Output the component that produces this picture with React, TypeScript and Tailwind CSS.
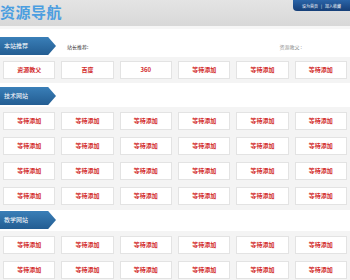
import React from "react";

const font = { fontFamily: '"Microsoft YaHei", "Noto Sans CJK SC", sans-serif' };

function Label({ text }: { text: string }) {
  return (
    <div className="h-[18px] w-[56px] bg-gradient-to-b from-[#3a7fb8] to-[#235d92] [clip-path:polygon(0_0,86%_0,100%_50%,86%_100%,0_100%)] flex items-center pl-[4px]">
      <span className="text-[6px] leading-none text-white">{text}</span>
    </div>
  );
}

function Cell({ text }: { text: string }) {
  return (
    <div className="h-[18px] bg-white border border-[#e3e3e3] flex items-center justify-center">
      <span className="text-[6px] leading-none font-bold text-[#d22c2c]">{text}</span>
    </div>
  );
}

function Grid({ items, top }: { items: string[]; top: boolean }) {
  return (
    <div
      className={
        top
          ? "bg-[#f4f4f4] px-[3px] py-[4px] grid grid-cols-6 gap-x-[6px] gap-y-[7px]"
          : "bg-[#f4f4f4] px-[3px] py-[5px] grid grid-cols-6 gap-x-[6px] gap-y-[7px]"
      }
    >
      {items.map((t, i) => (
        <Cell key={i} text={t} />
      ))}
    </div>
  );
}

export default function App() {
  const wait = (n: number) => Array.from({ length: n }, () => "等待添加");
  return (
    <div className="w-[350px] h-[280px] overflow-hidden bg-white" style={font}>
      <div className="h-[26px] bg-gradient-to-b from-[#e4e4e4] to-[#d8d8d8] flex justify-between items-start">
        <div className="text-[15px] leading-none font-bold text-[#4b9ee0] mt-[4px] ml-0 tracking-[0.5px]">资源导航</div>
        <div className="h-[11px] w-[57px] bg-gradient-to-b from-[#2a64a8] to-[#163f78] rounded-bl-[4px] flex items-center justify-center gap-[3px]">
          <span className="text-[4px] leading-none text-white">设为首页</span>
          <span className="text-[4px] leading-none text-white">|</span>
          <span className="text-[4px] leading-none text-white">加入收藏</span>
        </div>
      </div>
      <div className="h-[3px] bg-[#f6f6f6]" />
      <div className="flex items-center mt-[8px]">
        <Label text="本站推荐" />
        <span className="ml-[11px] text-[5px] leading-none text-[#333]">站长推荐:</span>
        <span className="ml-auto mr-[48px] text-[5px] leading-none text-[#999]">资源教父 :</span>
      </div>
      <div className="mt-[2px]">
        <Grid top items={["资源教父", "百度", "360", "等待添加", "等待添加", "等待添加"]} />
      </div>
      <div className="mt-[4px]">
        <Label text="技术网站" />
      </div>
      <div className="mt-[2px]">
        <Grid top={false} items={wait(24)} />
      </div>
      <div className="mt-[1px]">
        <Label text="教学网站" />
      </div>
      <div className="mt-[2px]">
        <Grid top={false} items={wait(12)} />
      </div>
    </div>
  );
}
